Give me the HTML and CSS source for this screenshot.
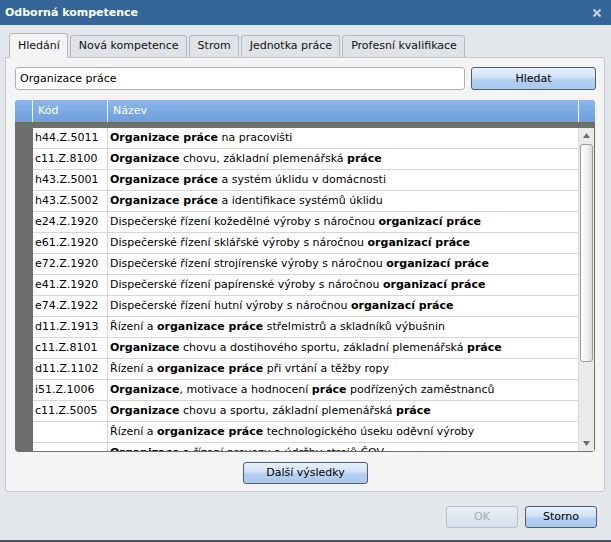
FILE: index.html
```html
<!DOCTYPE html>
<html lang="cs">
<head>
<meta charset="utf-8">
<title>Odborná kompetence</title>
<link rel="stylesheet" href="styles.css">
</head>
<body>
<div class="dialog">
  <div class="titlebar">
    <span class="title">Odborná kompetence</span>
    <svg class="close" width="10" height="10" viewBox="0 0 10 10"><path d="M1.5 1.5 L8.5 8.5 M8.5 1.5 L1.5 8.5" stroke="#c9d5e2" stroke-width="2"/></svg>
  </div>
  <div class="content">
    <div class="tabs">
      <div class="tab active">Hledání</div>
      <div class="tab">Nová kompetence</div>
      <div class="tab">Strom</div>
      <div class="tab">Jednotka práce</div>
      <div class="tab">Profesní kvalifikace</div>
    </div>
    <div class="panel">
      <div class="search">
        <div class="input">Organizace práce</div>
        <div class="btn btn-search">Hledat</div>
      </div>
      <div class="grid">
        <div class="ghead">
          <div class="hc hc-gut"></div>
          <div class="hc hc-kod">Kód</div>
          <div class="hc hc-nazev">Název</div>
          <div class="hc hc-sc"></div>
        </div>
        <div class="gbody">
          <div class="gutter"></div>
          <div class="rows">
            <div class="row"><div class="c-kod">h44.Z.5011</div><div class="c-nazev"><b>Organizace práce</b> na pracovišti</div></div>
            <div class="row"><div class="c-kod">c11.Z.8100</div><div class="c-nazev"><b>Organizace</b> chovu, základní plemenářská <b>práce</b></div></div>
            <div class="row"><div class="c-kod">h43.Z.5001</div><div class="c-nazev"><b>Organizace práce</b> a systém úklidu v domácnosti</div></div>
            <div class="row"><div class="c-kod">h43.Z.5002</div><div class="c-nazev"><b>Organizace práce</b> a identifikace systémů úklidu</div></div>
            <div class="row"><div class="c-kod">e24.Z.1920</div><div class="c-nazev">Dispečerské řízení kožedělné výroby s náročnou <b>organizací práce</b></div></div>
            <div class="row"><div class="c-kod">e61.Z.1920</div><div class="c-nazev">Dispečerské řízení sklářské výroby s náročnou <b>organizací práce</b></div></div>
            <div class="row"><div class="c-kod">e72.Z.1920</div><div class="c-nazev">Dispečerské řízení strojírenské výroby s náročnou <b>organizací práce</b></div></div>
            <div class="row"><div class="c-kod">e41.Z.1920</div><div class="c-nazev">Dispečerské řízení papírenské výroby s náročnou <b>organizací práce</b></div></div>
            <div class="row"><div class="c-kod">e74.Z.1922</div><div class="c-nazev">Dispečerské řízení hutní výroby s náročnou <b>organizací práce</b></div></div>
            <div class="row"><div class="c-kod">d11.Z.1913</div><div class="c-nazev">Řízení a <b>organizace práce</b> střelmistrů a skladníků výbušnin</div></div>
            <div class="row"><div class="c-kod">c11.Z.8101</div><div class="c-nazev"><b>Organizace</b> chovu a dostihového sportu, základní plemenářská <b>práce</b></div></div>
            <div class="row"><div class="c-kod">d11.Z.1102</div><div class="c-nazev">Řízení a <b>organizace práce</b> při vrtání a těžby ropy</div></div>
            <div class="row"><div class="c-kod">i51.Z.1006</div><div class="c-nazev"><b>Organizace</b>, motivace a hodnocení <b>práce</b> podřízených zaměstnanců</div></div>
            <div class="row"><div class="c-kod">c11.Z.5005</div><div class="c-nazev"><b>Organizace</b> chovu a sportu, základní plemenářská <b>práce</b></div></div>
            <div class="row"><div class="c-kod"></div><div class="c-nazev">Řízení a <b>organizace práce</b> technologického úseku oděvní výroby</div></div>
            <div class="row"><div class="c-kod"></div><div class="c-nazev"><b>Organizace</b> a řízení provozu a údržby strojů ČOV</div></div>
          </div>
          <div class="scrollbar">
            <svg class="arr" width="7" height="5" viewBox="0 0 7 5"><path d="M3.5 0 L7 5 L0 5 Z" fill="#6d6d6d"/></svg>
            <div class="thumb"></div>
            <div class="track"></div>
            <svg class="arr" width="7" height="5" viewBox="0 0 7 5"><path d="M0 0 L7 0 L3.5 5 Z" fill="#6d6d6d"/></svg>
          </div>
        </div>
      </div>
      <div class="more">
        <div class="btn btn-more">Další výsledky</div>
      </div>
    </div>
    <div class="footer">
      <div class="btn btn-foot disabled">OK</div>
      <div class="btn btn-foot">Storno</div>
    </div>
  </div>
</div>
</body>
</html>
```

FILE: styles.css
```css
* { box-sizing: border-box; }
html, body { margin: 0; padding: 0; }
body {
  font-family: "DejaVu Sans", Verdana, sans-serif;
  font-size: 11px;
  color: #000;
  background: #e3e7eb;
}
.dialog {
  width: 611px;
  height: 542px;
  display: flex;
  flex-direction: column;
  background: #e3e7eb;
  border-bottom: 2px solid #44535f;
  overflow: hidden;
}
.titlebar {
  height: 25px;
  flex: none;
  background: #346599;
  display: flex;
  align-items: center;
  justify-content: space-between;
  padding: 0 9px 0 5px;
}
.title {
  color: #fff;
  font-weight: bold;
  font-size: 11px;
}
.close { display: block; }
.content {
  flex: 1;
  display: flex;
  flex-direction: column;
  padding: 8px 6px 0 5px;
}
.tabs {
  display: flex;
  align-items: flex-end;
  gap: 2px;
  padding-left: 4px;
  height: 24px;
  position: relative;
  z-index: 1;
}
.tab {
  height: 22px;
  line-height: 20px;
  padding: 0 7px 0 8px;
  background: #dfe3e8;
  border: 1px solid #b5bac1;
  border-bottom: none;
  border-radius: 3px 3px 0 0;
  color: #111;
  white-space: nowrap;
}
.tab.active {
  height: 25px;
  line-height: 23px;
  margin-bottom: -1px;
  background: #f4f4f4;
  border-color: #b8b8b8;
}
.panel {
  height: 435px;
  background: #f4f4f4;
  border: 1px solid #c3c6ca;
  border-radius: 0 3px 3px 3px;
  padding: 9px 8px 0 9px;
  display: flex;
  flex-direction: column;
}
.search {
  display: flex;
  gap: 6px;
  height: 23px;
}
.input {
  width: 450px;
  flex: none;
  height: 23px;
  background: #fff;
  border: 1px solid #b0b0b0;
  border-radius: 3px;
  padding: 0 4px;
  line-height: 21px;
}
.btn {
  border: 1px solid #505d6b;
  border-radius: 3px;
  background: linear-gradient(to bottom, #e6f0fc 0%, #d2e2f7 45%, #b6d0f1 55%, #a9c8ee 100%);
  text-align: center;
  color: #000;
}
.btn-search {
  width: 125px;
  flex: none;
  height: 23px;
  line-height: 21px;
}
.grid {
  margin-top: 10px;
  width: 580px;
  height: 352px;
  background: #6e6e6e;
  border-radius: 4px;
  overflow: hidden;
  display: flex;
  flex-direction: column;
}
.ghead {
  height: 22px;
  flex: none;
  display: flex;
  background: linear-gradient(to bottom, #8cb6e9, #6b9fdd);
  color: #fff;
}
.hc {
  line-height: 22px;
  border-right: 1px solid #f0f6fd;
  padding-left: 5px;
}
.hc-gut { width: 18px; }
.hc-kod { width: 75px; }
.hc-nazev { width: 471px; }
.hc-sc { flex: 1; border-right: none; }
.gbody {
  flex: 1;
  display: flex;
  padding: 6px 1px 1px 0;
  min-height: 0;
}
.gutter {
  width: 18px;
  flex: none;
}
.rows {
  width: 545px;
  background: #fff;
  overflow: hidden;
}
.row {
  display: flex;
  height: 21px;
  border-bottom: 1px solid #d6d6d6;
  line-height: 20px;
  white-space: nowrap;
}
.c-kod {
  width: 75px;
  flex: none;
  padding-left: 2px;
  border-right: 1px solid #d6d6d6;
}
.c-nazev {
  flex: 1;
  padding-left: 2px;
  overflow: hidden;
}
.scrollbar {
  flex: 1;
  background: #eaeaea;
  border-left: 1px solid #dadada;
  display: flex;
  flex-direction: column;
  align-items: center;
  padding: 5px 1px 5px 1px;
}
.arr { display: block; flex: none; }
.thumb {
  margin-top: 6px;
  width: 13px;
  height: 218px;
  flex: none;
  border: 1px solid #9b9b9b;
  border-radius: 3px;
  background: linear-gradient(to right, #ffffff, #f1f1f1 50%, #dcdcdc);
}
.track { flex: 1; }
.more {
  margin-top: 10px;
  display: flex;
  justify-content: center;
}
.btn-more {
  width: 125px;
  height: 22px;
  line-height: 20px;
}
.footer {
  display: flex;
  justify-content: flex-end;
  gap: 7px;
  padding: 14px 8px 0 0;
}
.btn-foot {
  width: 72px;
  height: 22px;
  line-height: 20px;
}
.btn.disabled {
  border-color: #b4c0cc;
  background: linear-gradient(to bottom, #e9eff5, #d6e0ea);
  color: #a3abb3;
}
```
